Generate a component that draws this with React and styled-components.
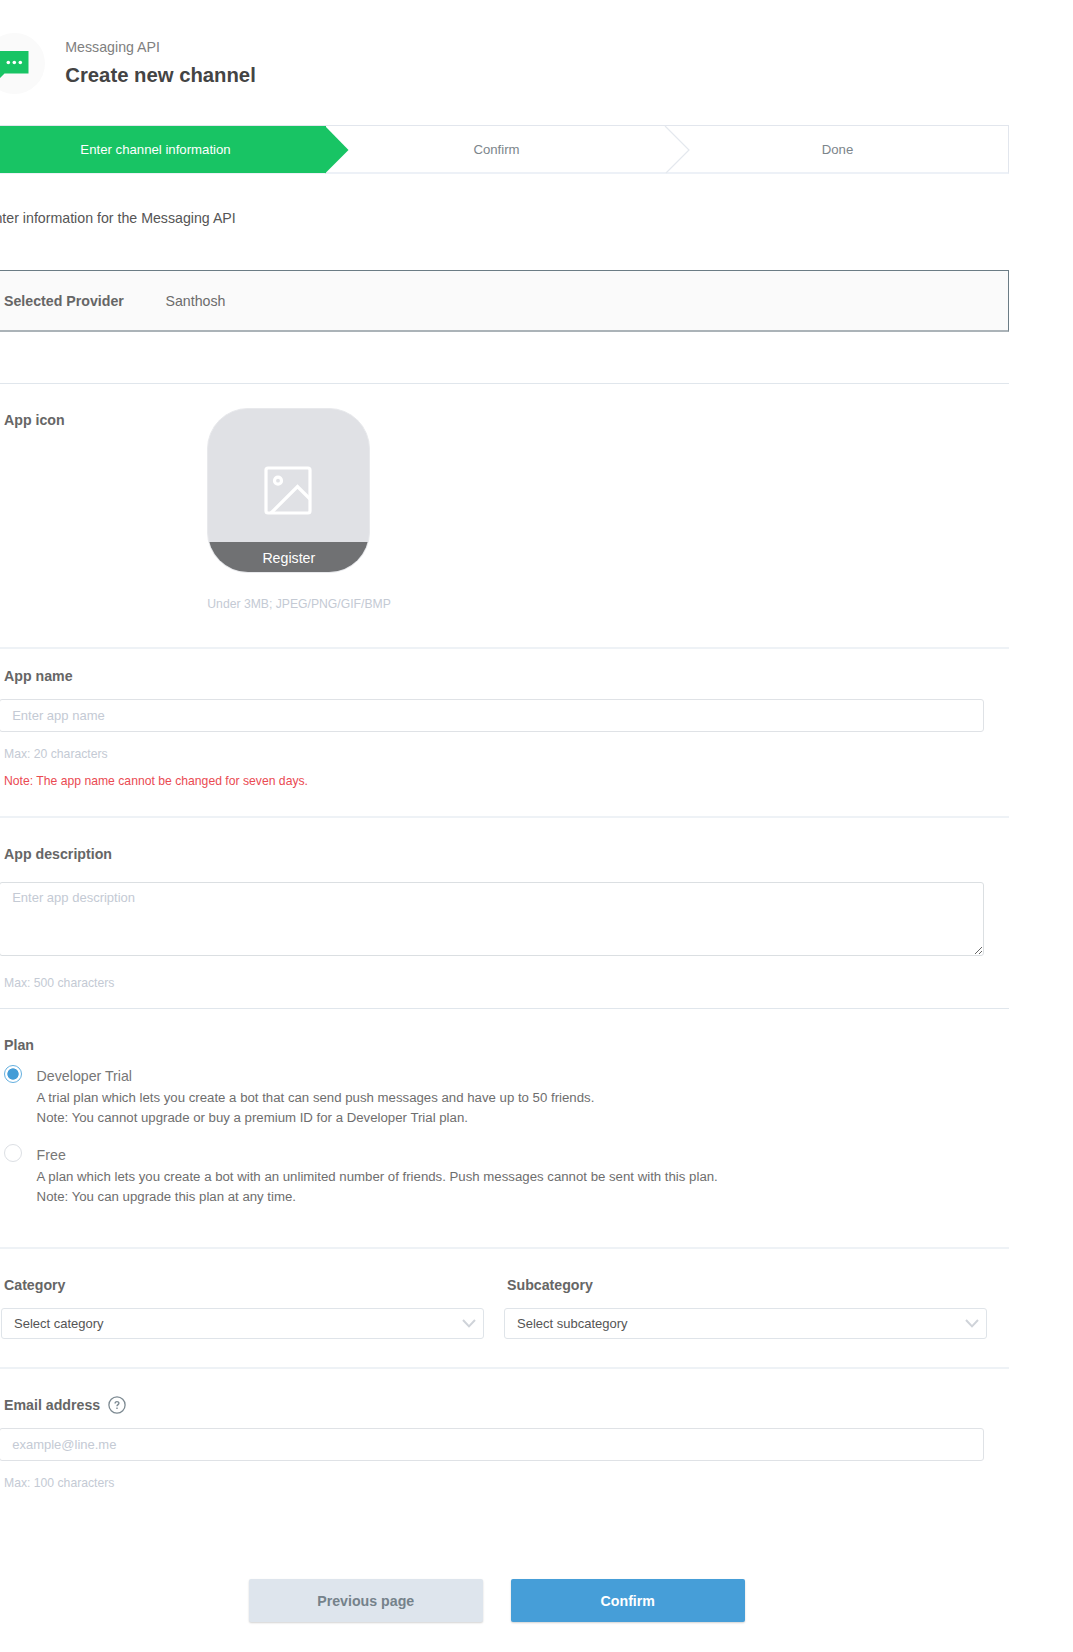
import React, { useState } from "react";
import styled, { createGlobalStyle } from "styled-components";

const GlobalStyle = createGlobalStyle`
  *, *::before, *::after { box-sizing: border-box; }
  body {
    margin: 0;
    background: #fff;
    overflow: hidden;
  }
  body, input, textarea, button {
    font-family: "Liberation Sans", Arial, sans-serif;
  }
`;

const Page = styled.main`
  width: 1024px;
  height: 1652px;
  margin-left: -15px;
  padding-top: 33px;
  color: #6c6c6c;
  font-size: 14.2px;
  line-height: 20px;
  white-space: nowrap;
`;

const Header = styled.header`
  display: flex;
  height: 92px;
`;

const Badge = styled.div`
  width: 61px;
  height: 61px;
  margin-left: -1px;
  border-radius: 50%;
  background: #fafafa;
  display: flex;
  padding: 18px 0 0 16px;
`;

const Heading = styled.div`
  margin: 4px 0 0 20.3px;
  color: #808080;
`;

const Title = styled.h1`
  margin: 4px 0 0;
  font-size: 20.3px;
  line-height: 28px;
  color: #444;
`;

const Steps = styled.ol`
  display: grid;
  grid-template-columns: 341px 341px 1fr;
  height: 49px;
  margin: 0;
  padding: 0;
  list-style: none;
  border: solid #e2e6ed;
  border-width: 1px 1px 2px 0;
  border-bottom-color: #edf1f7;
`;

const Step = styled.li`
  position: relative;
  display: flex;
  align-items: center;
  justify-content: center;
  margin-bottom: -1px;
  padding-top: 1px;
  font-size: 13.2px;
  color: ${(p) => (p.$active ? "#fff" : "#7c858b")};
  background: ${(p) => (p.$active ? "#18c464" : "transparent")};
`;

const StepArrow = styled.svg`
  position: absolute;
  top: 0;
  left: calc(100% - 1px);
  z-index: 1;
  overflow: visible;
`;

const Intro = styled.p`
  margin: 34px 0 0;
  color: #555;
`;

const Provider = styled.div`
  display: flex;
  align-items: center;
  height: 62px;
  margin: 42px 0 51px;
  padding-left: 18px;
  background: #fafafa;
  border: solid #6b7c85;
  border-width: 1px 1px 2px;
  border-bottom-color: #abb3b8;
`;

const ProviderLabel = styled.strong`
  width: 161.5px;
  color: #666;
`;

const Section = styled.section`
  height: ${(p) => p.$height}px;
  padding: ${(p) => p.$top}px 0 0 19px;
  border-top: ${(p) => (p.$soft ? "2px solid #eef2f6" : "1px solid #e0e6ec")};
`;

const Label = styled.div`
  display: flex;
  align-items: center;
  gap: 8px;
  height: 20px;
  font-weight: bold;
  color: #666;
  padding-left: ${(p) => p.$indent || 0}px;
`;

const IconRow = styled.div`
  display: grid;
  grid-template-columns: 203.3px 1fr;

  > ${Label} {
    margin-top: 2px;
  }
`;

const Tile = styled.button`
  display: flex;
  flex-direction: column;
  width: 163px;
  height: 165px;
  padding: 0;
  border: 1px solid #e8e9ec;
  border-radius: 41px;
  overflow: hidden;
  background: #e0e1e5;
`;

const TilePicture = styled.span`
  width: 100%;
  height: 133px;
  padding: 57px 2px 0 0;
  display: flex;
  justify-content: center;
`;

const TileCaption = styled.span`
  width: 100%;
  height: 30px;
  line-height: 32px;
  background: #707173;
  color: #fff;
  font-size: 14.2px;
  text-align: center;
`;

const Hint = styled.p`
  margin: ${(p) => p.$gap}px 0 0;
  font-size: 12.2px;
  color: ${(p) => (p.$alert ? "#ea4a52" : "#c4cad4")};
`;

const Input = styled.input`
  display: block;
  width: 984.5px;
  height: 33px;
  margin: 13px 0 0 -5px;
  padding: 0 12.2px;
  border: 1px solid #dfe2e6;
  border-radius: 3px;
  font-size: 13px;
  color: #555;
  outline: none;

  &::placeholder {
    color: #c4cad4;
    opacity: 1;
  }
`;

const TextArea = styled.textarea`
  display: block;
  width: 984.5px;
  height: 74px;
  margin: 18px 0 0 -5px;
  padding: 5px 12.2px;
  border: 1px solid #dbdfe2;
  border-radius: 3px;
  font-size: 13px;
  line-height: 20px;
  outline: none;

  &::placeholder {
    color: #c4cad4;
    opacity: 1;
  }
`;

const Plans = styled.div`
  padding-top: 10px;
  margin-left: -0.4px;
`;

const Plan = styled.label`
  display: flex;
  gap: 15px;
  height: 79px;
`;

const Radio = styled.input`
  appearance: none;
  flex: none;
  width: 18px;
  height: 18px;
  margin: 0;
  border: 1.5px solid #dcdfe4;
  border-radius: 50%;

  &:checked {
    border-color: #63afdf;
    background: radial-gradient(circle, #459dd7 5.3px, #fff 6px);
  }
`;

const PlanText = styled.div`
  padding-top: 1px;
  color: #777;
`;

const PlanNote = styled.div`
  margin-top: 2px;
  font-size: 13.23px;
  line-height: 20px;
  color: #6e6e6e;
`;

const Columns = styled.div`
  display: grid;
  grid-template-columns: 482.5px 482.5px;
  gap: 20.5px;
  margin-left: -3px;
`;

const Select = styled.button`
  display: flex;
  align-items: center;
  justify-content: space-between;
  width: 100%;
  height: 31px;
  margin-top: 13px;
  padding: 0 7px 0 12px;
  border: 1px solid #dfe4e9;
  border-radius: 3px;
  background: #fff;
  font-size: 13px;
  color: #555;
`;

const Actions = styled.div`
  display: flex;
  gap: 28.5px;
  padding-left: 264px;
`;

const Button = styled.button`
  width: 233.5px;
  height: 43px;
  padding: 0;
  border: 0;
  border-radius: 2px;
  font-size: 14.2px;
  font-weight: bold;
  color: ${(p) => (p.$primary ? "#fff" : "#75828b")};
  background: ${(p) => (p.$primary ? "#469ed8" : "#dee5ed")};
  box-shadow: 0 1px 2px rgba(0, 0, 0, 0.18);
`;

const ChatIcon = () => (
  <svg width="29" height="28" viewBox="0 0 29 28">
    <path d="M0 0H28.5V22.5H4.5L0 27Z" fill="#18c464" />
    <circle cx="8.3" cy="11.5" r="1.8" fill="#fff" />
    <circle cx="14.3" cy="11.5" r="1.8" fill="#fff" />
    <circle cx="20.3" cy="11.5" r="1.8" fill="#fff" />
  </svg>
);

const PictureIcon = () => (
  <svg width="48" height="49" viewBox="0 0 48 49" fill="none" stroke="#fff" strokeWidth="3.2">
    <rect x="2" y="2" width="44" height="45" rx="2" />
    <circle cx="14" cy="14.7" r="3.5" />
    <path d="M7 47L33.5 20.5L46 33" />
  </svg>
);

const ChevronIcon = () => (
  <svg width="14" height="9" viewBox="0 0 14 9" fill="none" stroke="#cfd3d9" strokeWidth="2">
    <path d="M1 1L7 7.4L13 1" />
  </svg>
);

const HelpIcon = () => (
  <svg width="18" height="18" viewBox="0 0 18 18" fill="none" stroke="#7d8a92" strokeWidth="1.3">
    <circle cx="9" cy="9" r="8.1" />
    <path d="M7.1 7.4C7.1 5 10.9 5 10.9 7.3C10.9 8.6 9 8.7 9 10.3M9 11.5V13" strokeWidth="1.4" />
  </svg>
);

const plans = [
  {
    name: "Developer Trial",
    notes: [
      "A trial plan which lets you create a bot that can send push messages and have up to 50 friends.",
      "Note: You cannot upgrade or buy a premium ID for a Developer Trial plan.",
    ],
  },
  {
    name: "Free",
    notes: [
      "A plan which lets you create a bot with an unlimited number of friends. Push messages cannot be sent with this plan.",
      "Note: You can upgrade this plan at any time.",
    ],
  },
];

export default function App() {
  const [plan, setPlan] = useState("Developer Trial");

  return (
    <>
      <GlobalStyle />
      <Page>
        <Header>
          <Badge>
            <ChatIcon />
          </Badge>
          <Heading>
            Messaging API
            <Title>Create new channel</Title>
          </Heading>
        </Header>

        <Steps>
          <Step $active>
            Enter channel information
            <StepArrow width="24" height="47">
              <path d="M0 0L23.5 24L0 47.5Z" fill="#18c464" />
            </StepArrow>
          </Step>
          <Step>
            Confirm
            <StepArrow width="24" height="47">
              <path d="M-1 0L23 24L0 47" fill="none" stroke="#e4e8ee" strokeWidth="1.2" />
            </StepArrow>
          </Step>
          <Step>Done</Step>
        </Steps>

        <Intro>Enter information for the Messaging API</Intro>

        <Provider>
          <ProviderLabel>Selected Provider</ProviderLabel>
          <span>Santhosh</span>
        </Provider>

        <Section $height={264} $top={24}>
          <IconRow>
            <Label>App icon</Label>
            <div>
              <Tile>
                <TilePicture>
                  <PictureIcon />
                </TilePicture>
                <TileCaption>Register</TileCaption>
              </Tile>
              <Hint $gap={21}>Under 3MB; JPEG/PNG/GIF/BMP</Hint>
            </div>
          </IconRow>
        </Section>

        <Section $soft $height={169} $top={17}>
          <Label>App name</Label>
          <Input placeholder="Enter app name" />
          <Hint $gap={12}>Max: 20 characters</Hint>
          <Hint $gap={7} $alert>
            Note: The app name cannot be changed for seven days.
          </Hint>
        </Section>

        <Section $soft $height={192} $top={26}>
          <Label>App description</Label>
          <TextArea placeholder="Enter app description" />
          <Hint $gap={17}>Max: 500 characters</Hint>
        </Section>

        <Section $height={239} $top={26}>
          <Label>Plan</Label>
          <Plans>
            {plans.map(({ name, notes }) => (
              <Plan key={name}>
                <Radio
                  type="radio"
                  name="plan"
                  checked={plan === name}
                  onChange={() => setPlan(name)}
                />
                <PlanText>
                  {name}
                  <PlanNote>
                    {notes.map((note) => (
                      <div key={note}>{note}</div>
                    ))}
                  </PlanNote>
                </PlanText>
              </Plan>
            ))}
          </Plans>
        </Section>

        <Section $soft $height={120} $top={26}>
          <Columns>
            <div>
              <Label $indent={3}>Category</Label>
              <Select>
                Select category
                <ChevronIcon />
              </Select>
            </div>
            <div>
              <Label $indent={3}>Subcategory</Label>
              <Select>
                Select subcategory
                <ChevronIcon />
              </Select>
            </div>
          </Columns>
        </Section>

        <Section $soft $height={212} $top={26}>
          <Label>
            Email address
            <HelpIcon />
          </Label>
          <Input placeholder="example@line.me" />
          <Hint $gap={12}>Max: 100 characters</Hint>
        </Section>

        <Actions>
          <Button>Previous page</Button>
          <Button $primary>Confirm</Button>
        </Actions>
      </Page>
    </>
  );
}
